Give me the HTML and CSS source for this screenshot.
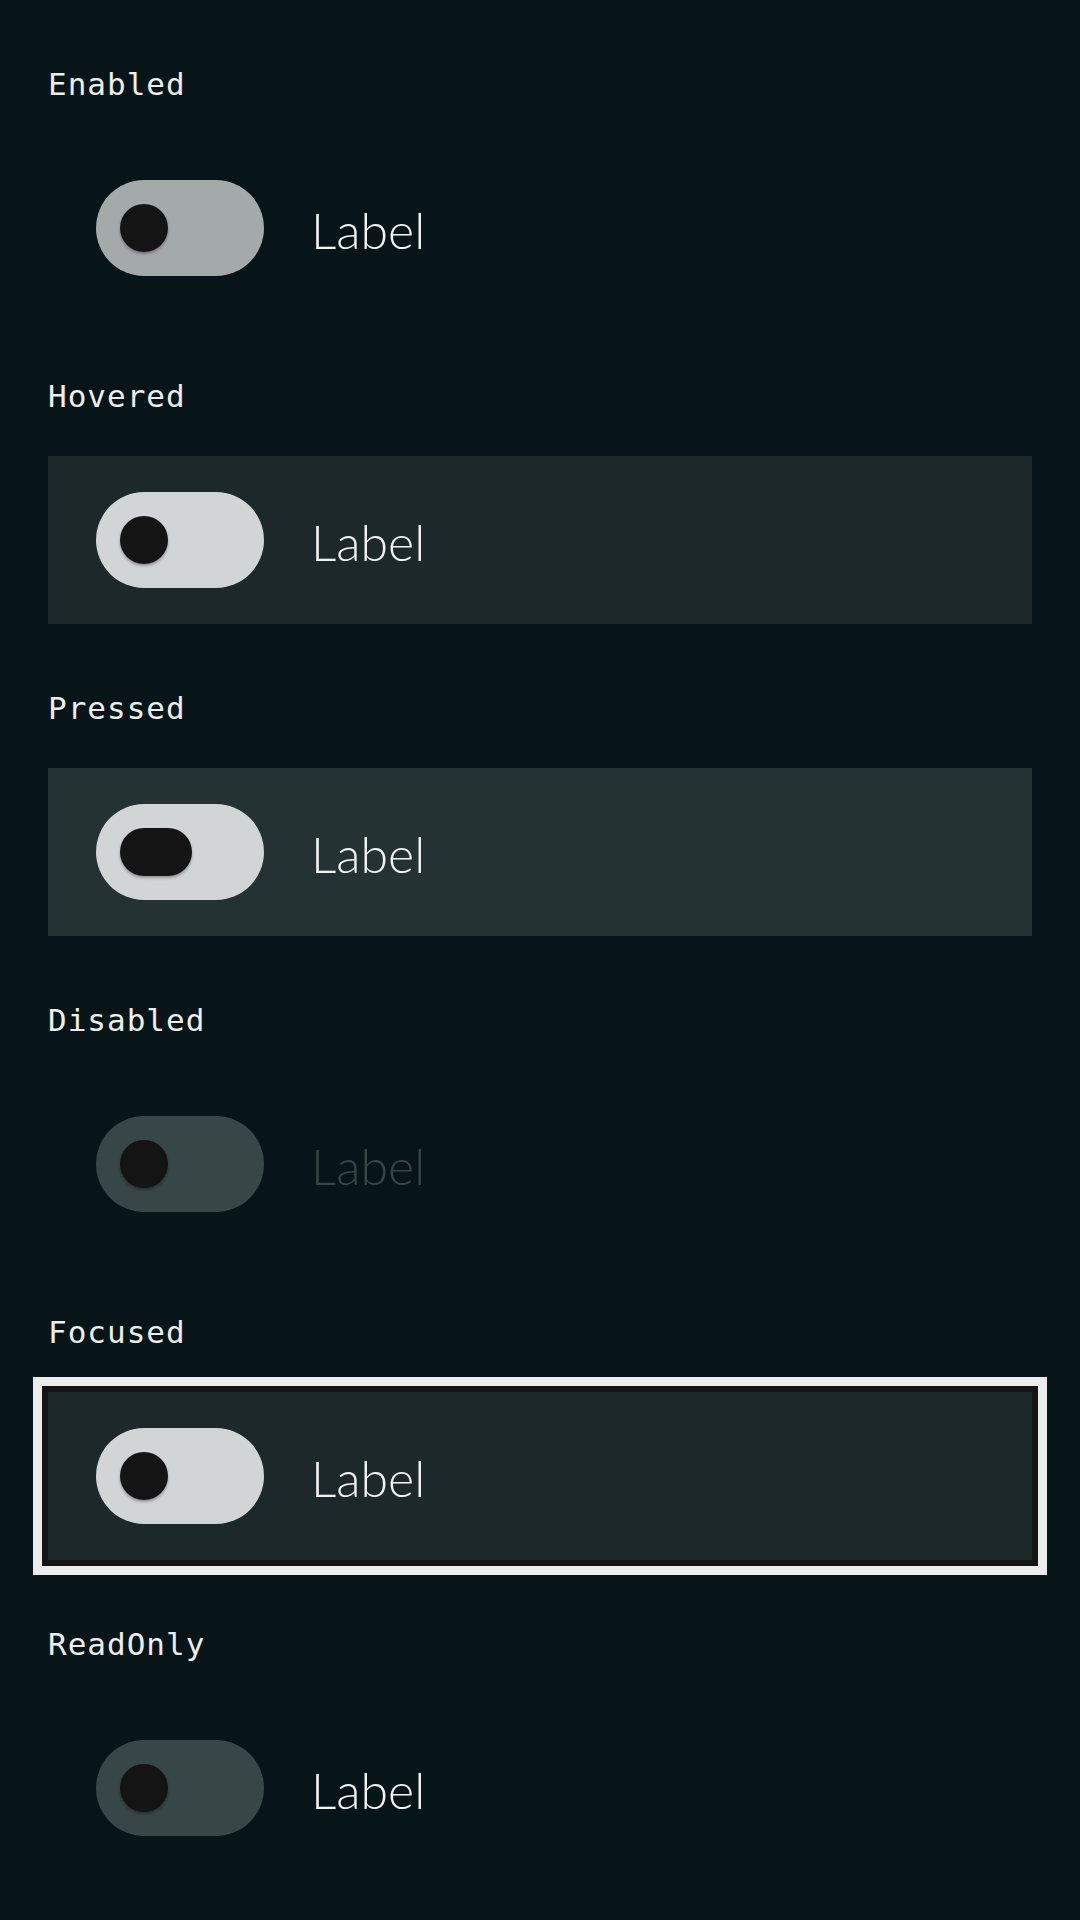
FILE: index.html
```html
<!DOCTYPE html>
<html lang="en">
<head>
<meta charset="utf-8">
<title>Switch states</title>
<link rel="stylesheet" href="styles.css">
</head>
<body>
<div class="page">
  <section class="section">
    <div class="title">Enabled</div>
    <div class="row">
      <div class="track track-enabled"><div class="knob"></div></div>
      <div class="label">Label</div>
    </div>
  </section>
  <section class="section">
    <div class="title">Hovered</div>
    <div class="row row-hovered">
      <div class="track track-active"><div class="knob"></div></div>
      <div class="label">Label</div>
    </div>
  </section>
  <section class="section">
    <div class="title">Pressed</div>
    <div class="row row-pressed">
      <div class="track track-active"><div class="knob knob-pressed"></div></div>
      <div class="label">Label</div>
    </div>
  </section>
  <section class="section">
    <div class="title">Disabled</div>
    <div class="row">
      <div class="track track-muted"><div class="knob"></div></div>
      <div class="label label-disabled">Label</div>
    </div>
  </section>
  <section class="section">
    <div class="title">Focused</div>
    <div class="row row-hovered row-focused">
      <div class="track track-active"><div class="knob"></div></div>
      <div class="label">Label</div>
    </div>
  </section>
  <section class="section">
    <div class="title">ReadOnly</div>
    <div class="row">
      <div class="track track-muted"><div class="knob"></div></div>
      <div class="label">Label</div>
    </div>
  </section>
</div>
</body>
</html>
```
FILE: styles.css
```css
html, body {
  margin: 0;
  padding: 0;
  background: #071519;
}

.page {
  width: 1080px;
  display: flex;
  flex-direction: column;
}

.section {
  box-sizing: border-box;
  height: 312px;
  padding: 66px 48px 0 48px;
}

.title {
  font-family: "DejaVu Sans Mono", monospace;
  font-size: 31px;
  line-height: 36px;
  height: 36px;
  letter-spacing: 1px;
  color: #eeeeee;
}

.row {
  box-sizing: border-box;
  margin-top: 42px;
  height: 168px;
  display: flex;
  align-items: center;
  padding-left: 48px;
  gap: 47px;
}

.row-hovered {
  background: #1c2829;
}

.row-pressed {
  background: #243233;
}

.row-focused {
  box-shadow: 0 0 0 6px #141414, 0 0 0 15px #ececec;
}

.track {
  box-sizing: border-box;
  width: 168px;
  height: 96px;
  border-radius: 48px;
  padding: 24px;
  display: flex;
  align-items: center;
  flex-shrink: 0;
}

.track-enabled {
  background: #a4a9aa;
}

.track-active {
  background: #d1d5d5;
}

.track-muted {
  background: #374646;
}

.knob {
  width: 48px;
  height: 48px;
  border-radius: 24px;
  background: #141414;
  box-shadow: 0 2px 3px rgba(0, 0, 0, 0.3);
}

.knob-pressed {
  width: 72px;
}

.label {
  font-family: Lato, "Liberation Sans", sans-serif;
  font-weight: 300;
  font-size: 50px;
  line-height: 60px;
  padding-top: 3px;
  color: #f2f2f2;
}

.label-disabled {
  color: #374545;
}
```
